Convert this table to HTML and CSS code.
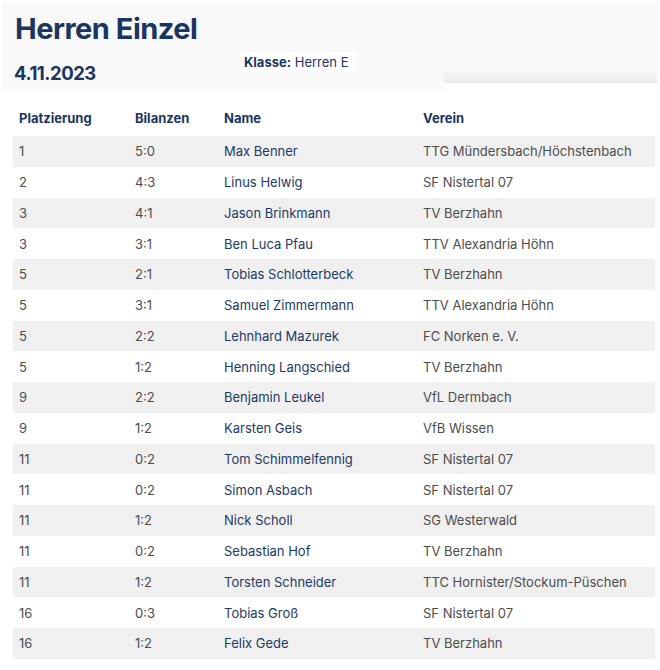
FILE: index.html
```html
<!DOCTYPE html>
<html lang="de">
<head>
<meta charset="utf-8">
<link rel="stylesheet" href="styles.css">
</head>
<body>
<header class="head">
  <div class="head-left">
    <h1 class="title">Herren Einzel</h1>
    <div class="sub">
      <span class="date">4.11.2023</span>
      <span class="klasse"><b>Klasse:</b> Herren E</span>
    </div>
  </div>
  <div class="head-right"></div>
</header>
<table class="results">
  <thead>
    <tr><th class="c1">Platzierung</th><th class="c2">Bilanzen</th><th class="c3">Name</th><th class="c4">Verein</th></tr>
  </thead>
  <tbody>
    <tr><td>1</td><td>5:0</td><td class="name">Max Benner</td><td>TTG Mündersbach/Höchstenbach</td></tr>
    <tr><td>2</td><td>4:3</td><td class="name">Linus Helwig</td><td>SF Nistertal 07</td></tr>
    <tr><td>3</td><td>4:1</td><td class="name">Jason Brinkmann</td><td>TV Berzhahn</td></tr>
    <tr><td>3</td><td>3:1</td><td class="name">Ben Luca Pfau</td><td>TTV Alexandria Höhn</td></tr>
    <tr><td>5</td><td>2:1</td><td class="name">Tobias Schlotterbeck</td><td>TV Berzhahn</td></tr>
    <tr><td>5</td><td>3:1</td><td class="name">Samuel Zimmermann</td><td>TTV Alexandria Höhn</td></tr>
    <tr><td>5</td><td>2:2</td><td class="name">Lehnhard Mazurek</td><td>FC Norken e. V.</td></tr>
    <tr><td>5</td><td>1:2</td><td class="name">Henning Langschied</td><td>TV Berzhahn</td></tr>
    <tr><td>9</td><td>2:2</td><td class="name">Benjamin Leukel</td><td>VfL Dermbach</td></tr>
    <tr><td>9</td><td>1:2</td><td class="name">Karsten Geis</td><td>VfB Wissen</td></tr>
    <tr><td>11</td><td>0:2</td><td class="name">Tom Schimmelfennig</td><td>SF Nistertal 07</td></tr>
    <tr><td>11</td><td>0:2</td><td class="name">Simon Asbach</td><td>SF Nistertal 07</td></tr>
    <tr><td>11</td><td>1:2</td><td class="name">Nick Scholl</td><td>SG Westerwald</td></tr>
    <tr><td>11</td><td>0:2</td><td class="name">Sebastian Hof</td><td>TV Berzhahn</td></tr>
    <tr><td>11</td><td>1:2</td><td class="name">Torsten Schneider</td><td>TTC Hornister/Stockum-Püschen</td></tr>
    <tr><td>16</td><td>0:3</td><td class="name">Tobias Groß</td><td>SF Nistertal 07</td></tr>
    <tr><td>16</td><td>1:2</td><td class="name">Felix Gede</td><td>TV Berzhahn</td></tr>
  </tbody>
</table>
</body>
</html>
```
FILE: styles.css
```css
html, body {
  margin: 0;
  padding: 0;
  background: #ffffff;
}
body {
  font-family: Inter, "Liberation Sans", sans-serif;
  color: #4d4d4d;
  padding: 2px 3px 0 2px;
}
.head {
  display: flex;
  align-items: flex-start;
  height: 89px;
}
.head-left {
  width: 442px;
  height: 89px;
  background: #f9f9f9;
  padding: 10px 0 0 13px;
  box-sizing: border-box;
}
.head-right {
  flex: 1;
  height: 81px;
  background: linear-gradient(to bottom, #f9f9f9 0, #f9f9f9 82%, #ececec 100%);
}
.title {
  margin: 0;
  font-size: 29px;
  font-weight: 700;
  color: #1b3560;
  letter-spacing: -0.5px;
  line-height: 34px;
}
.sub {
  display: flex;
  align-items: flex-start;
  margin-top: 6px;
}
.date {
  font-size: 18.5px;
  font-weight: 700;
  color: #1b3560;
  letter-spacing: -0.5px;
  margin: 10px 0 0 -1px;
  width: 227px;
}
.klasse {
  background: #fff;
  font-size: 13px;
  color: #1b3560;
  padding: 2px 8px 2px 3px;
}
.klasse b {
  font-weight: 700;
}
.results {
  border-collapse: collapse;
  margin: 9px 0 0 11px;
  width: 642px;
  font-size: 13px;
  table-layout: fixed;
}
.results th {
  text-align: left;
  color: #1b3560;
  font-weight: 700;
  height: 36px;
  padding: 0 6px;
  box-sizing: border-box;
}
.results td {
  height: 30.76px;
  padding: 0 6px;
  box-sizing: border-box;
  white-space: nowrap;
}
.results tbody tr:nth-child(odd) {
  background: #f0f0f0;
}
.c1 { width: 116px; }
.c2 { width: 89px; }
.c3 { width: 199px; }
.results td.name {
  color: #1e3a66;
}
```
